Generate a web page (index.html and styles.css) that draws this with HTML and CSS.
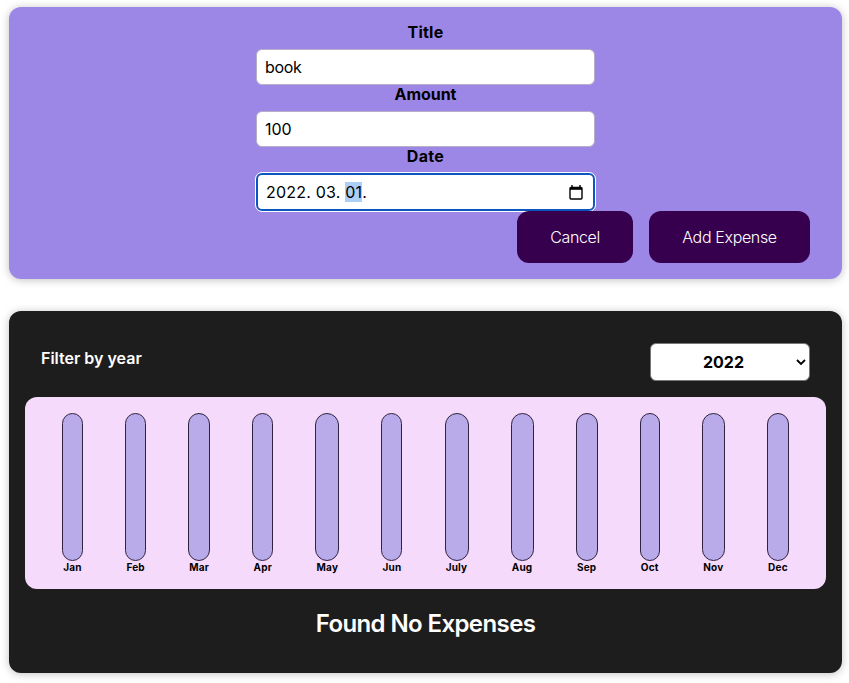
FILE: index.html
```
<!DOCTYPE html>
<html lang="en">
<head>
<meta charset="utf-8">
<title>Expenses</title>
<link rel="stylesheet" href="styles.css">
</head>
<body>
<form class="card new-expense">
  <div class="controls">
    <label class="title-label" for="title">Title</label>
    <input class="field" id="title" type="text" value="book">
    <label class="amount-label" for="amount">Amount</label>
    <input class="field amount" id="amount" type="text" value="100">
    <label class="date-label">Date</label>
    <div class="field date" tabindex="0">
      <span class="date-text">2022. 03. <span class="selected">01</span>.</span>
      <svg class="calendar" width="14" height="15" viewBox="0 0 14 15" fill="none" stroke="#000"><rect x="1" y="2.5" width="12" height="11.5" rx="1" stroke-width="1.4"/><path d="M1 3.5H13" stroke-width="2.6"/><path d="M3 0V3M11 0V3" stroke-width="1.4"/></svg>
    </div>
  </div>
  <div class="actions">
    <button type="button" class="cancel">Cancel</button>
    <button type="button" class="add">Add Expense</button>
  </div>
</form>
<section class="card expenses">
  <div class="filter">
    <span class="filter-label">Filter by year</span>
    <div class="select"><span>2022</span><svg width="10" height="7" viewBox="0 0 10 7" fill="none" stroke="#000" stroke-width="1.8"><path d="M1 1L5 5L9 1"/></svg></div>
  </div>
  <div class="chart">
    <div class="month"><div class="bar"></div><span>Jan</span></div>
    <div class="month"><div class="bar"></div><span>Feb</span></div>
    <div class="month"><div class="bar"></div><span>Mar</span></div>
    <div class="month"><div class="bar"></div><span>Apr</span></div>
    <div class="month"><div class="bar"></div><span>May</span></div>
    <div class="month"><div class="bar"></div><span>Jun</span></div>
    <div class="month"><div class="bar"></div><span>July</span></div>
    <div class="month"><div class="bar"></div><span>Aug</span></div>
    <div class="month"><div class="bar"></div><span>Sep</span></div>
    <div class="month"><div class="bar"></div><span>Oct</span></div>
    <div class="month"><div class="bar"></div><span>Nov</span></div>
    <div class="month"><div class="bar"></div><span>Dec</span></div>
  </div>
  <h2>Found No Expenses</h2>
</section>
</body>
</html>
```
FILE: styles.css
```
* { box-sizing: border-box; }
body {
  margin: 0;
  padding: 7px 7px 10px 9px;
  background: #fff;
  font-family: Inter, "Liberation Sans", sans-serif;
  font-size: 16px;
  color: #000;
}
.card {
  border-radius: 12px;
  box-shadow: 0 1px 8px rgba(0, 0, 0, 0.25);
}
.new-expense {
  height: 272px;
  padding: 16px 32px;
  background: #9d87e6;
}
.controls {
  display: flex;
  flex-direction: column;
  align-items: center;
}
.controls label {
  height: 18px;
  margin-bottom: 8px;
  line-height: 19px;
  font-weight: 700;
}
.title-label { letter-spacing: 0.2px; }
.amount-label { letter-spacing: -0.05px; }
.date-label { letter-spacing: 0.3px; }
.field {
  width: 339px;
  height: 36px;
  padding: 0 8px;
  border: 1px solid #b7afc8;
  border-radius: 6px;
  background: #fff;
  font: 16px/20px Inter, sans-serif;
  color: #000;
}
#title { letter-spacing: -0.35px; }
.amount { letter-spacing: -0.05px; }
.date {
  display: flex;
  align-items: center;
  justify-content: space-between;
  height: 38px;
  padding: 0 10px 0 8px;
  border: 2px solid #0b57c0;
  outline: 1px solid #fff;
  outline-offset: 0;
}
.date-text { white-space: pre; letter-spacing: 0.2px; }
.selected { background: #accef7; }
.actions {
  display: flex;
  justify-content: flex-end;
  gap: 16px;
}
.actions button {
  height: 52px;
  padding: 0;
  border: 0;
  border-radius: 12px;
  background: #37004f;
  color: #fff;
  font: 300 16px/20px Inter, sans-serif;
  letter-spacing: -0.35px;
}
.cancel { width: 116px; }
.add { width: 161px; }
.expenses {
  height: 362px;
  margin-top: 32px;
  padding: 32px 16px 16px;
  background: #1d1d1d;
}
.filter {
  display: flex;
  justify-content: space-between;
  height: 54px;
  padding: 0 16px;
}
.filter-label {
  margin-top: 5px;
  line-height: 20px;
  font-weight: 600;
  color: #fff;
}
.select {
  display: flex;
  align-items: center;
  justify-content: space-between;
  width: 160px;
  height: 38px;
  padding: 0 3px 0 52px;
  border: 1px solid #777;
  border-radius: 6px;
  background: #fff;
  font-weight: 700;
}
.chart {
  display: grid;
  grid-template-columns: 21px 21px 22px 21px 24px 21px 24px 23px 22px 20px 23px 22px;
  justify-content: space-around;
  height: 192px;
  padding: 16px;
  border-radius: 12px;
  background: #f5dafb;
}
.month {
  display: flex;
  flex-direction: column;
  align-items: center;
}
.month span {
  font-size: 10px;
  line-height: 13px;
  font-weight: 700;
  letter-spacing: 0.2px;
  white-space: nowrap;
}
.bar {
  width: 100%;
  height: 148px;
  border: 1px solid #302340;
  border-radius: 12px;
  background: #b9abea;
}
h2 {
  margin: 20px 0 0;
  font-size: 24px;
  line-height: 30px;
  font-weight: 600;
  letter-spacing: -0.6px;
  text-align: center;
  color: #fff;
}
```
